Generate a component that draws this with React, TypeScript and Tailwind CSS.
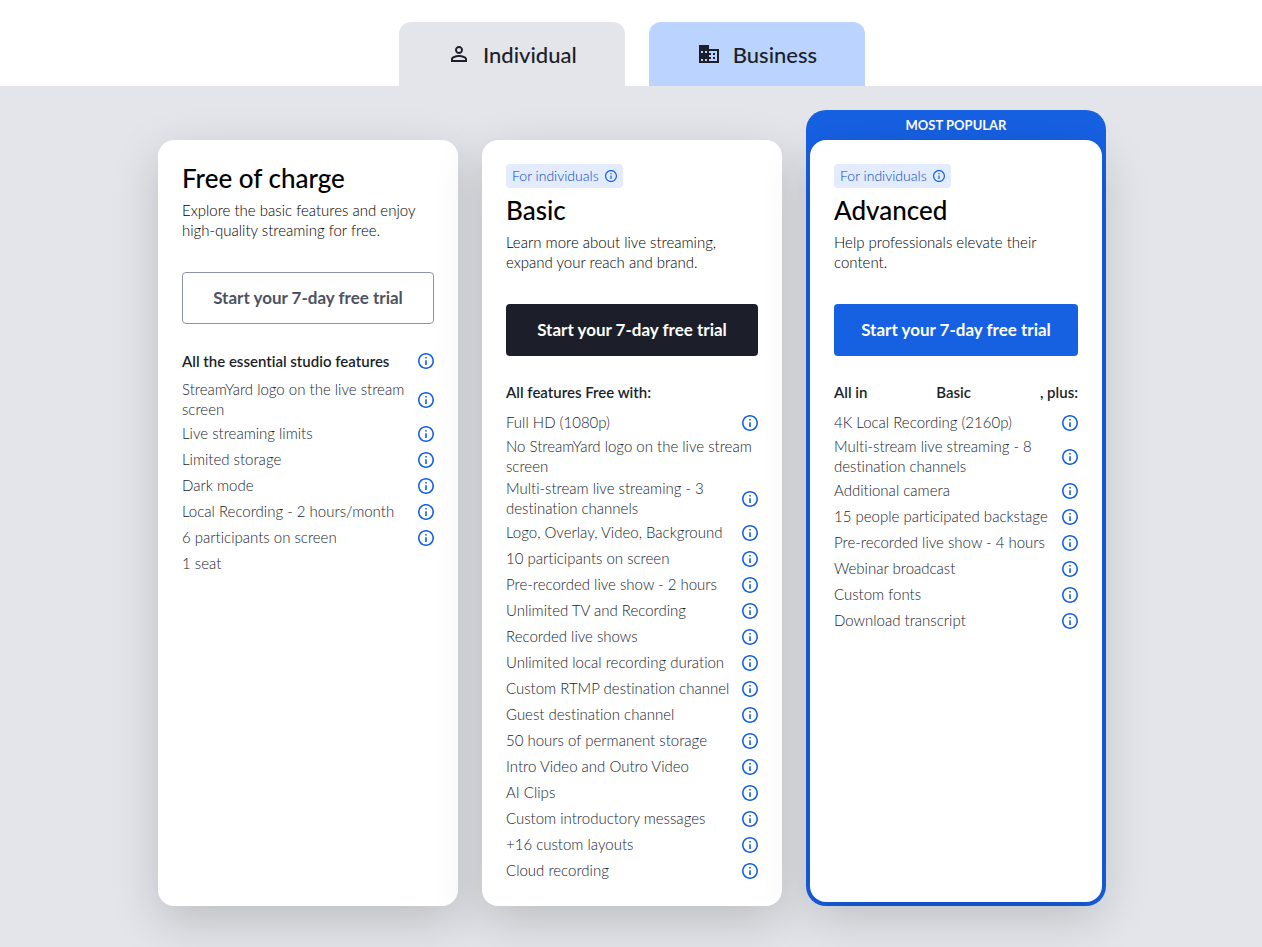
import type { ReactNode } from 'react';
import { MdPersonOutline } from 'react-icons/md';

type Feature = { text: string; info?: boolean };

type Plan = {
  name: string;
  description: string;
  badge?: string;
  buttonClass: string;
  heading: string[];
  headingInfo?: boolean;
  features: Feature[];
  popular?: boolean;
};

const withInfo = (items: string[]): Feature[] => items.map((text) => ({ text, info: true }));

const plans: Plan[] = [
  {
    name: 'Free of charge',
    description: 'Explore the basic features and enjoy high-quality streaming for free.',
    buttonClass: 'border border-[#8d93a1] bg-white text-[#4d5361]',
    heading: ['All the essential studio features'],
    headingInfo: true,
    features: [
      ...withInfo([
        'StreamYard logo on the live stream screen',
        'Live streaming limits',
        'Limited storage',
        'Dark mode',
        'Local Recording - 2 hours/month',
        '6 participants on screen',
      ]),
      { text: '1 seat' },
    ],
  },
  {
    name: 'Basic',
    description: 'Learn more about live streaming, expand your reach and brand.',
    badge: 'For individuals',
    buttonClass: 'bg-[#1c1f2a] text-white',
    heading: ['All features Free with:'],
    features: [
      { text: 'Full HD (1080p)', info: true },
      { text: 'No StreamYard logo on the live stream screen' },
      ...withInfo([
        'Multi-stream live streaming - 3 destination channels',
        'Logo, Overlay, Video, Background',
        '10 participants on screen',
        'Pre-recorded live show - 2 hours',
        'Unlimited TV and Recording',
        'Recorded live shows',
        'Unlimited local recording duration',
        'Custom RTMP destination channel',
        'Guest destination channel',
        '50 hours of permanent storage',
        'Intro Video and Outro Video',
        'AI Clips',
        'Custom introductory messages',
        '+16 custom layouts',
        'Cloud recording',
      ]),
    ],
  },
  {
    name: 'Advanced',
    description: 'Help professionals elevate their content.',
    badge: 'For individuals',
    buttonClass: 'bg-[#1660e2] text-white',
    heading: ['All in', 'Basic', ', plus:'],
    popular: true,
    features: withInfo([
      '4K Local Recording (2160p)',
      'Multi-stream live streaming - 8 destination channels',
      'Additional camera',
      '15 people participated backstage',
      'Pre-recorded live show - 4 hours',
      'Webinar broadcast',
      'Custom fonts',
      'Download transcript',
    ]),
  },
];

function InfoIcon({ className }: { className: string }) {
  return (
    <svg viewBox="2 2 20 20" fill="currentColor" aria-hidden="true" className={className}>
      <path d="M11 7h2v2h-2zm0 4h2v6h-2zm1-9C6.480 2 2 6.480 2 12s4.480 10 10 10 10-4.480 10-10S17.520 2 12 2zm0 18c-4.410 0-8-3.590-8-8s3.590-8 8-8 8 3.590 8 8-3.590 8-8 8z" />
    </svg>
  );
}

function BusinessIcon({ className }: { className: string }) {
  return (
    <svg viewBox="0 0 24 24" fill="currentColor" fillRule="evenodd" aria-hidden="true" className={className}>
      <path d="M2 3h10v4h10v14H2zM4 9v2h2V9zM8 9v2h2V9zM4 17v2h2v-2zM8 17v2h2v-2zM12 9v2h2v2h-2v2h2v2h-2v2h8V9zM16 11h2v2h-2zM16 15h2v2h-2z" />
    </svg>
  );
}

function InfoButton({ label, className }: { label: string; className?: string }) {
  return (
    <button
      type="button"
      aria-label={`More about ${label}`}
      className={`shrink-0 text-[#1660e2] ${className ?? ''}`}
    >
      <InfoIcon className="block size-4" />
    </button>
  );
}

function Tab({ selected, icon, children }: { selected?: boolean; icon: ReactNode; children: string }) {
  return (
    <button
      type="button"
      role="tab"
      aria-selected={selected ?? false}
      className={`flex h-16 items-center gap-3 rounded-t-xl px-12 text-[22px] font-medium text-[#1c1f2a] ${
        selected ? 'bg-[#e4e5ea]' : 'bg-[#bad4ff]'
      }`}
    >
      {icon}
      {children}
    </button>
  );
}

function PlanBody({ plan }: { plan: Plan }) {
  return (
    <>
      {plan.badge && (
        <button
          type="button"
          className="mb-2 flex h-6 items-center gap-1.5 rounded bg-[#e3ebff] px-1.5 text-sm font-light text-[#0b46c4]"
        >
          {plan.badge}
          <InfoIcon className="size-3 text-[#1660e2]" />
        </button>
      )}
      <h2 className="text-[26px] leading-7 font-medium text-black">{plan.name}</h2>
      <p className="mt-2 text-[15px] leading-5 font-light text-black">{plan.description}</p>
      <button type="button" className={`mt-8 h-[52px] w-full rounded text-[17px] font-bold ${plan.buttonClass}`}>
        Start your 7-day free trial
      </button>
      <h3
        className={`mt-6 mb-1.5 flex items-center justify-between text-[15px] leading-5 font-semibold text-[#1c1f2a] ${
          plan.headingInfo ? 'min-h-[25px]' : 'min-h-6'
        }`}
      >
        {plan.heading.map((part) => (
          <span key={part}>{part}</span>
        ))}
        {plan.headingInfo && <InfoButton label={plan.heading[0]} />}
      </h3>
      <ul className="flex flex-col gap-0.5">
        {plan.features.map(({ text, info }) => (
          <li
            key={text}
            className="flex min-h-6 items-center justify-between gap-2 text-[15px] leading-5 font-light text-[#20242f]"
          >
            <span>{text}</span>
            {info && <InfoButton label={text} className="pt-0.5" />}
          </li>
        ))}
      </ul>
    </>
  );
}

function PlanCard({ plan }: { plan: Plan }) {
  if (plan.popular) {
    return (
      <article className="flex w-[300px] flex-col rounded-[20px] bg-[#1660e2] px-1 pb-1">
        <p className="text-center text-[13px] leading-[30px] font-bold text-white">MOST POPULAR</p>
        <div className="grow rounded-2xl bg-white p-6 shadow-[0_16px_48px_rgba(0,0,0,0.17)]">
          <PlanBody plan={plan} />
        </div>
      </article>
    );
  }
  return (
    <article className="mt-[30px] w-[300px] rounded-2xl bg-white p-6 shadow-[0_16px_48px_rgba(0,0,0,0.17)]">
      <PlanBody plan={plan} />
    </article>
  );
}

export default function App() {
  return (
    <div className="min-h-screen bg-[#e4e5ea] font-['Lato','Liberation_Sans',sans-serif] [font-variant-ligatures:no-common-ligatures]">
      <div role="tablist" className="flex justify-center gap-6 bg-white pt-[22px] pl-0.5">
        <Tab selected icon={<MdPersonOutline className="size-6" />}>
          Individual
        </Tab>
        <Tab icon={<BusinessIcon className="size-6" />}>Business</Tab>
      </div>
      <main className="flex justify-center gap-6 overflow-hidden pt-6 pb-12 pl-0.5">
        {plans.map((plan) => (
          <PlanCard key={plan.name} plan={plan} />
        ))}
      </main>
    </div>
  );
}
